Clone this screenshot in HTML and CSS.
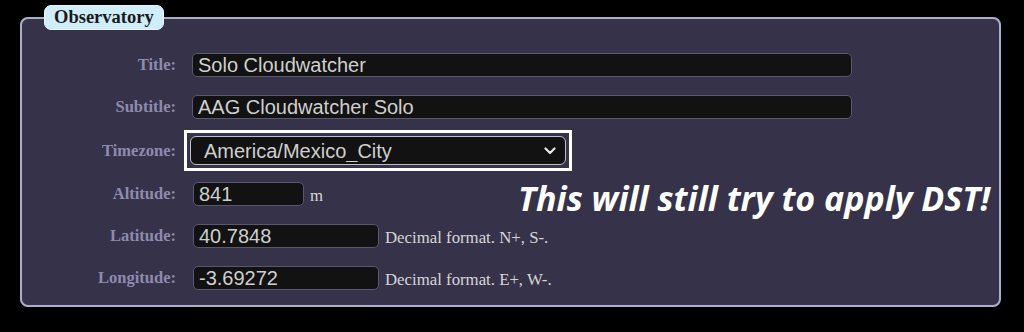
FILE: index.html
```html
<!DOCTYPE html>
<html lang="en">
<head>
    <meta charset="UTF-8">
    <meta name="viewport" content="width=device-width, initial-scale=1.0">
    <title>Observatory</title>
    <link rel="stylesheet" href="styles.css">
</head>
<body>
    <fieldset class="panel">
        <legend class="panel-title">Observatory</legend>
        <div class="rows">
            <div class="row">
                <label class="label" for="title">Title:</label>
                <input class="field field-wide" id="title" type="text" value="Solo Cloudwatcher">
            </div>
            <div class="row">
                <label class="label" for="subtitle">Subtitle:</label>
                <input class="field field-wide" id="subtitle" type="text" value="AAG Cloudwatcher Solo">
            </div>
            <div class="row row-select">
                <label class="label" for="timezone">Timezone:</label>
                <div class="select-wrap">
                    <select class="select" id="timezone">
                        <option>America/Mexico_City</option>
                    </select>
                    <svg class="chevron" width="12" height="8" viewBox="0 0 12 8">
                        <path d="M1.5 1.5 L6 6 L10.5 1.5" fill="none" stroke="#e8e8e8" stroke-width="2.2" stroke-linecap="round" stroke-linejoin="round"/>
                    </svg>
                </div>
            </div>
            <div class="row">
                <label class="label" for="altitude">Altitude:</label>
                <input class="field field-short" id="altitude" type="text" value="841">
                <span class="hint">m</span>
            </div>
            <div class="row">
                <label class="label" for="latitude">Latitude:</label>
                <input class="field field-mid" id="latitude" type="text" value="40.7848">
                <span class="hint">Decimal format. N+, S-.</span>
            </div>
            <div class="row">
                <label class="label" for="longitude">Longitude:</label>
                <input class="field field-mid" id="longitude" type="text" value="-3.69272">
                <span class="hint">Decimal format. E+, W-.</span>
            </div>
        </div>
        <div class="note">This will still try to apply DST!</div>
    </fieldset>
</body>
</html>
```

FILE: styles.css
```css
body {
    margin: 0;
    background: #000;
    height: 332px;
    overflow: hidden;
}

.panel {
    position: relative;
    box-sizing: border-box;
    width: 981px;
    margin: 5px 0 0 20px;
    padding: 23px 0 15px 22px;
    border: 2px solid #a9aec9;
    border-radius: 8px;
    background: #36324a;
}

.panel-title {
    box-sizing: border-box;
    height: 25px;
    padding: 0 9px;
    background: #cfeefa;
    border: 1px solid #e6f7fc;
    border-radius: 7px;
    font-family: "Liberation Serif", serif;
    font-weight: bold;
    font-size: 18.5px;
    line-height: 23px;
    color: #1a1a1a;
}

.rows {
    display: flex;
    flex-direction: column;
    gap: 18px;
}

.row {
    display: flex;
    align-items: center;
    height: 24px;
}

.row-select {
    height: 29px;
    margin: -1px 0;
}

.label {
    width: 132px;
    margin-right: 16px;
    text-align: right;
    font-family: "Liberation Serif", serif;
    font-weight: bold;
    font-size: 16.5px;
    color: #8e8bad;
}

.field {
    box-sizing: border-box;
    height: 24px;
    padding: 0 5px;
    background: #121212;
    border: 1px solid #5a5870;
    border-radius: 5px;
    font-family: "Liberation Sans", Arial, sans-serif;
    font-size: 20px;
    color: #cfcfcf;
    outline: none;
}

.field-wide {
    width: 660px;
}

.field-short {
    width: 111px;
    margin-left: 1px;
}

.field-mid {
    width: 186px;
    margin-left: 1px;
}

.hint {
    margin-left: 6px;
    padding-top: 3px;
    font-family: "Liberation Serif", serif;
    font-size: 16.8px;
    color: #d6d6d6;
}

.select-wrap {
    position: relative;
    margin-left: -2px;
    outline: 3px solid #fff;
    outline-offset: 3px;
}

.select {
    display: block;
    box-sizing: border-box;
    width: 376px;
    height: 29px;
    padding: 0 13px;
    appearance: none;
    background: #121212;
    border: 1px solid #bdbdc6;
    border-radius: 6px;
    font-family: "Liberation Sans", Arial, sans-serif;
    font-size: 20px;
    color: #cfcfcf;
}

.chevron {
    position: absolute;
    right: 10px;
    top: 11px;
}

.note {
    position: absolute;
    left: 496px;
    top: 145px;
    font-family: "Open Sans", Lato, sans-serif;
    font-weight: bold;
    font-style: italic;
    font-size: 34px;
    color: #fff;
}
```
